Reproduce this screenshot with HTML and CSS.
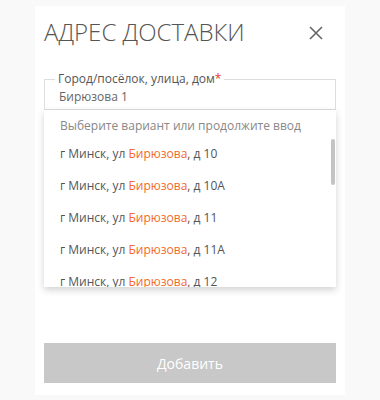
FILE: index.html
```html
<!DOCTYPE html>
<html lang="ru">
<head>
  <meta charset="UTF-8">
  <meta name="viewport" content="width=device-width, initial-scale=1.0">
  <title>Адрес доставки</title>
  <link rel="stylesheet" href="styles.css">
</head>
<body>
  <div class="modal">
    <div class="modal-head">
      <h2>АДРЕС ДОСТАВКИ</h2>
      <button class="close" aria-label="Закрыть">
        <svg width="14" height="14" viewBox="0 0 14 14">
          <path d="M1 1L13 13M13 1L1 13" stroke="#666" stroke-width="1.6" fill="none"/>
        </svg>
      </button>
    </div>

    <div class="field-wrap">
      <fieldset class="field">
        <legend>Город/посёлок, улица, дом<span class="req">*</span></legend>
        <input type="text" value="Бирюзова 1">
      </fieldset>

      <div class="suggest">
        <div class="suggest-hint">Выберите вариант или продолжите ввод</div>
        <ul class="suggest-list">
          <li>г Минск, ул <b>Бирюзова</b>, д 10</li>
          <li>г Минск, ул <b>Бирюзова</b>, д 10А</li>
          <li>г Минск, ул <b>Бирюзова</b>, д 11</li>
          <li>г Минск, ул <b>Бирюзова</b>, д 11А</li>
          <li>г Минск, ул <b>Бирюзова</b>, д 12</li>
        </ul>
        <div class="scroll-thumb"></div>
      </div>
    </div>

    <button class="add" disabled>Добавить</button>
  </div>
</body>
</html>
```

FILE: styles.css
```css
body {
  margin: 0;
  background-color: #f9f9f9;
  font-family: "Open Sans", Arial, sans-serif;
  color: #555;
}
.modal {
  width: 310px;
  height: 389px;
  margin: 6px 0 0 35px;
  padding: 10px 9px 12px;
  box-sizing: border-box;
  background-color: #fff;
  display: flex;
  flex-direction: column;
}
.modal-head {
  display: flex;
  justify-content: space-between;
  align-items: center;
}
.modal-head h2 {
  margin: 0;
  font-size: 24px;
  line-height: 32px;
  font-weight: 300;
  color: #555;
}
.close {
  background: none;
  border: none;
  padding: 0;
  margin: 2px 13px 0 0;
  width: 14px;
  height: 14px;
  cursor: pointer;
  display: flex;
}
.field-wrap {
  position: relative;
  margin-top: 23px;
}
.field {
  margin: 0;
  padding: 0 10px 4px;
  border: 1px solid #ddd;
}
.field legend {
  padding: 0 3px;
  font-size: 12px;
  line-height: 16px;
  color: #555;
}
.req {
  color: #e53935;
}
.field input {
  display: block;
  width: 100%;
  height: 18px;
  padding: 0 4px;
  box-sizing: border-box;
  border: none;
  outline: none;
  font-family: inherit;
  font-size: 12px;
  color: #666;
  background: transparent;
}
.suggest {
  position: absolute;
  top: 100%;
  left: 0;
  right: 0;
  height: 177px;
  background-color: #fff;
  box-shadow: 0 3px 7px rgba(0,0,0,0.18);
  display: flex;
  flex-direction: column;
  overflow: hidden;
  font-size: 12px;
}
.suggest-hint {
  padding: 6px 16px 2px;
  line-height: 20px;
  color: #888;
  white-space: nowrap;
}
.suggest-list {
  list-style: none;
  margin: 0;
  padding: 0;
  flex: 1;
  overflow: hidden;
}
.suggest-list li {
  padding: 6px 16px;
  line-height: 20px;
  white-space: nowrap;
  cursor: pointer;
}
.suggest-list b {
  font-weight: normal;
  color: #f26a2a;
}
.scroll-thumb {
  position: absolute;
  top: 29px;
  right: 1px;
  width: 4px;
  height: 46px;
  border-radius: 2px;
  background-color: #c4c4c4;
}
.add {
  margin-top: auto;
  height: 40px;
  border: none;
  background-color: #c8c8c8;
  color: #fff;
  font-family: inherit;
  font-size: 14px;
}
```
